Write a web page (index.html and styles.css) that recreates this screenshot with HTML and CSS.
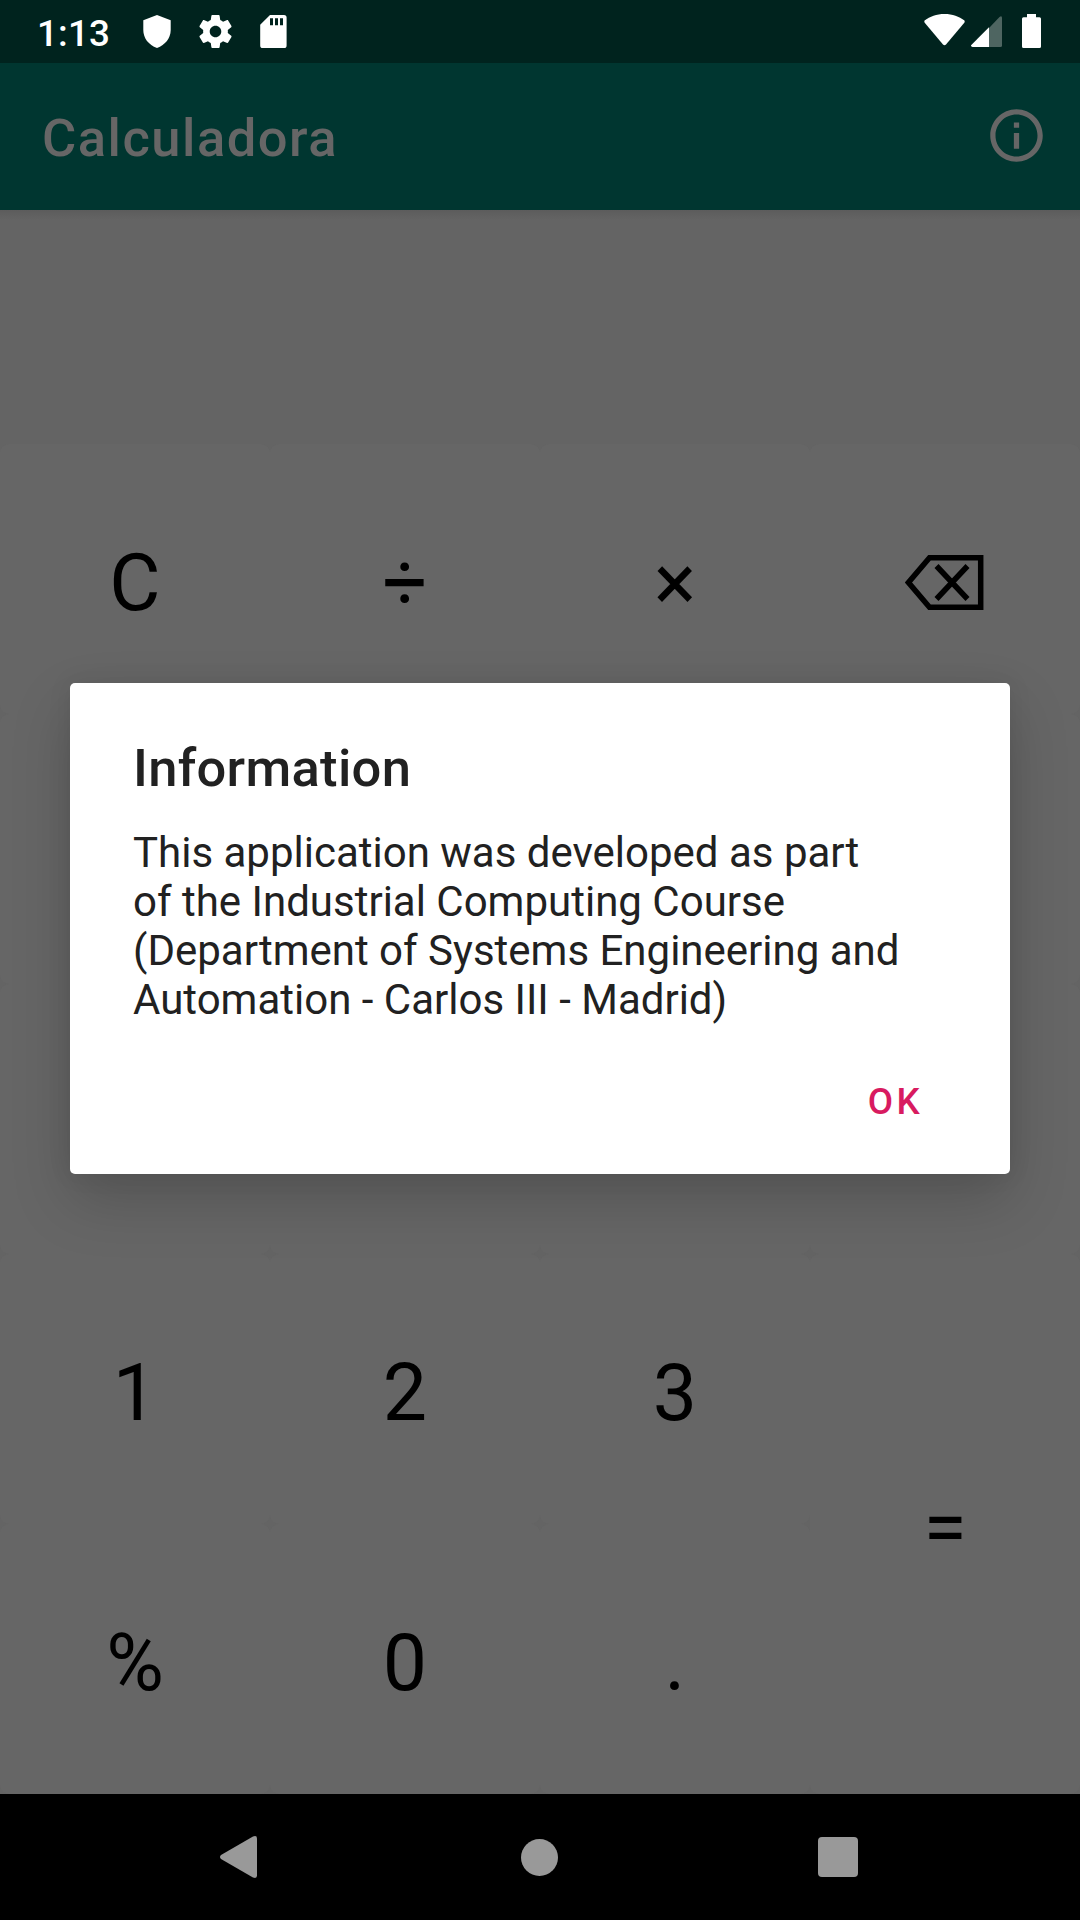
FILE: index.html
```html
<!DOCTYPE html>
<html lang="es">
<head>
<meta charset="utf-8">
<title>Calculadora</title>
<link rel="stylesheet" href="styles.css">
</head>
<body>
<div class="screen">
  <div class="status-bar">
    <span class="clock">1:13</span>
    <div class="notifications">
      <svg class="shield" viewBox="0 0 28 33"><path d="M14 0L27.700 5.200V15c0 8-5.500 15-13.700 18C5.500 30 .3 23 .3 15V5.200z"/></svg>
      <svg class="gear" viewBox="2 2 20 20"><path d="M19.430 12.980c.040-.320.070-.640.070-.980s-.030-.660-.070-.980l2.110-1.650c.190-.150.240-.420.120-.640l-2-3.460c-.120-.220-.390-.300-.610-.220l-2.490 1c-.520-.400-1.080-.730-1.690-.980l-.380-2.650C14.460 2.180 14.250 2 14 2h-4c-.250 0-.460.180-.490.420l-.380 2.650c-.610.250-1.170.590-1.690.980l-2.490-1c-.230-.090-.490 0-.610.220l-2 3.460c-.130.220-.070.490.120.640l2.110 1.650c-.040.320-.070.650-.070.980s.030.660.070.980l-2.110 1.650c-.190.150-.240.420-.120.640l2 3.460c.120.220.390.300.610.220l2.490-1c.520.400 1.080.730 1.690.980l.380 2.650c.030.240.240.420.490.420h4c.250 0 .460-.180.490-.420l.380-2.650c.610-.250 1.170-.590 1.690-.980l2.490 1c.230.090.490 0 .610-.220l2-3.460c.120-.220.070-.490-.120-.640l-2.110-1.650zM12 15.500c-1.930 0-3.500-1.570-3.500-3.500s1.570-3.500 3.500-3.500 3.500 1.570 3.500 3.500-1.570 3.500-3.500 3.500z"/></svg>
      <svg class="sd-card" viewBox="0 0 27 33"><path fill-rule="evenodd" d="M10 0H24a2.600 2.600 0 0 1 2.600 2.600V30.400A2.600 2.600 0 0 1 24 33H2.800A2.600 2.600 0 0 1 .2 30.400V9.800zM10 3.300V10.300H13V3.300zM15 3.300V10.300H18V3.300zM20 3.300V10.300H23V3.300z"/></svg>
    </div>
    <div class="system-icons">
      <svg class="wifi" viewBox="0 0 41 32"><path d="M20.500 0C12.500 0 5.800 2.600.9 6.300Q-.2 7.300.7 8.700L19 30.500q1.500 1.500 3 0L40.300 8.700q.9-1.400-.2-2.400C35.200 2.600 28.500 0 20.500 0z"/></svg>
      <svg class="signal" viewBox="0 0 31 31"><path class="faint" d="M18 12L28.500 1Q31 -.8 31 2V29.500Q31 31 29.500 31H18z"/><path d="M18 11.200V31H1.500Q-.8 30.500.3 28.900z"/></svg>
      <svg class="battery" viewBox="0 0 19 34"><path d="M5 0H14V3.300H17.500Q19 3.300 19 4.800V32.500Q19 34 17.500 34H1.500Q0 34 0 32.500V4.800Q0 3.300 1.500 3.300H5z"/></svg>
    </div>
  </div>
  <header class="app-bar">
    <h1>Calculadora</h1>
    <svg class="info" viewBox="0 0 24 24"><path d="M11 17h2v-6h-2v6zm1-15C6.480 2 2 6.480 2 12s4.480 10 10 10 10-4.480 10-10S17.520 2 12 2zm0 18c-4.410 0-8-3.590-8-8s3.590-8 8-8 8 3.590 8 8-3.590 8-8 8zM11 9h2V7h-2v2z"/></svg>
  </header>
  <main class="calculator">
    <div class="display"></div>
    <div class="keypad">
      <div class="key">C</div>
      <div class="key">÷</div>
      <div class="key">×</div>
      <div class="key"><svg class="backspace" viewBox="0 0 79 55"><path d="M24.500 2.750H75.700V52.250H24.500L3.500 27.500zM31.500 11L62.500 44M62.500 11L31.500 44"/></svg></div>
      <div class="key"></div>
      <div class="key"></div>
      <div class="key"></div>
      <div class="key"></div>
      <div class="key"></div>
      <div class="key"></div>
      <div class="key"></div>
      <div class="key"></div>
      <div class="key">1</div>
      <div class="key">2</div>
      <div class="key">3</div>
      <div class="key tall">=</div>
      <div class="key">%</div>
      <div class="key">0</div>
      <div class="key">.</div>
    </div>
  </main>
  <nav class="nav-bar">
    <svg class="back" viewBox="0 0 37 42"><path d="M1 19Q-1 21 1 23L33 41.500Q37 43 37 39.500V2.500Q37 -1 33 .5z"/></svg>
    <svg class="home" viewBox="0 0 37 37"><circle cx="18.500" cy="18.500" r="18.500"/></svg>
    <svg class="recent" viewBox="0 0 40 40"><rect width="40" height="40" rx="4"/></svg>
  </nav>
  <section class="dialog">
    <h2>Information</h2>
    <p>This application was developed as part<br>of the Industrial Computing Course<br>(Department of Systems Engineering and<br>Automation - Carlos III - Madrid)</p>
    <div class="actions"><span class="ok">OK</span></div>
  </section>
</div>
</body>
</html>
```
FILE: styles.css
```css
* { box-sizing: border-box; margin: 0; }

body {
  font-family: Roboto, "Liberation Sans", sans-serif;
  background: #666;
}

svg { display: block; }

.screen {
  position: relative;
  display: flex;
  flex-direction: column;
  width: 1080px;
  height: 1920px;
  overflow: hidden;
}

.status-bar {
  display: flex;
  align-items: flex-start;
  height: 63px;
  padding: 14px 39px 0 37px;
  background: #00231e;
  color: #fff;
  fill: #fff;
}

.clock {
  width: 106px;
  padding-top: 1px;
  font-size: 36.75px;
  line-height: 38px;
  font-weight: 500;
  letter-spacing: 0.2px;
}

.notifications { display: flex; gap: 28px; padding-top: 1px; }
.shield { width: 28px; height: 33px; }
.gear { width: 33px; height: 33px; }
.sd-card { width: 27px; height: 33px; }

.system-icons { display: flex; margin-left: auto; }
.wifi { width: 41px; height: 32px; }
.signal { width: 31px; height: 31px; margin: 2px 20px 0 6px; }
.signal .faint { fill: #4e6561; }
.battery { width: 19px; height: 34px; }

.app-bar {
  display: flex;
  align-items: center;
  justify-content: space-between;
  height: 147px;
  padding: 0 32px 0 42px;
  background: #003630;
  color: #666;
}

.app-bar h1 {
  padding-top: 2px;
  font-size: 52.5px;
  line-height: 62px;
  font-weight: 500;
  letter-spacing: 1.5px;
}

.info { width: 63px; height: 63px; margin-bottom: 2px; fill: #666; }

.calculator { background: #646464; }

.display {
  height: 234px;
  background: linear-gradient(#5c5c5c, #646464 10px);
}

.keypad {
  display: grid;
  grid-template-columns: repeat(4, 270px);
  grid-auto-rows: 270px;
}

.key {
  display: flex;
  align-items: center;
  justify-content: center;
  padding-top: 8px;
  border-radius: 9px;
  background: #666;
  color: #000;
  font-size: 78.75px;
  line-height: 92px;
}

.tall { grid-row: span 2; }

.backspace {
  width: 79px;
  height: 55px;
  margin: 0 2px 1px 0;
  fill: none;
  stroke: #000;
  stroke-width: 5.5px;
}

.nav-bar {
  display: grid;
  grid-template-columns: 301px 297px 40px;
  align-items: center;
  height: 126px;
  padding-left: 220px;
  background: #000;
  fill: #999;
}

.back { width: 37px; height: 42px; }
.home { width: 37px; height: 37px; }
.recent { width: 40px; height: 40px; }

.dialog {
  position: absolute;
  left: 70px;
  top: 683px;
  width: 940px;
  height: 491px;
  padding: 54px 63px 0;
  border-radius: 5px;
  background: #fff;
  color: #212121;
  box-shadow: 0 26px 60px rgba(0, 0, 0, 0.18), 0 0 24px rgba(0, 0, 0, 0.08);
}

.dialog h2 {
  font-size: 52.5px;
  line-height: 62px;
  font-weight: 500;
  letter-spacing: 0.3px;
}

.dialog p {
  margin-top: 29px;
  font-size: 42px;
  line-height: 49px;
  white-space: nowrap;
}

.actions { display: flex; justify-content: flex-end; padding: 56px 24px 0 0; }

.ok {
  color: #d81b60;
  font-size: 36.75px;
  line-height: 44px;
  font-weight: 500;
  letter-spacing: 3.3px;
}
```
